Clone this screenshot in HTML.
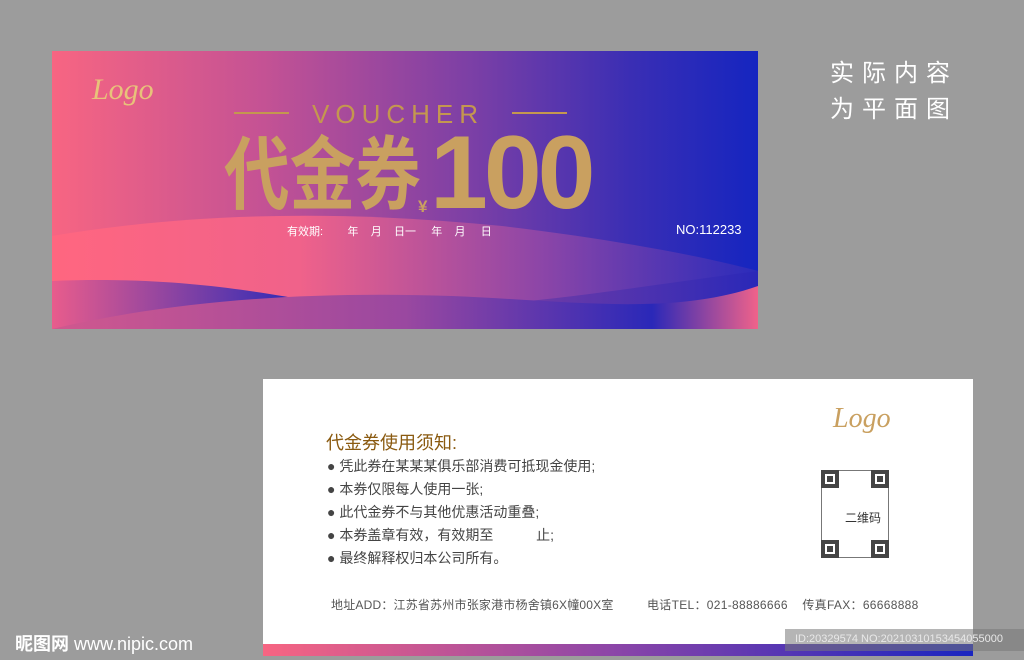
<!DOCTYPE html>
<html><head><meta charset="utf-8"><style>
*{margin:0;padding:0;box-sizing:border-box}
body{width:1024px;height:660px;background:#9c9c9c;position:relative;overflow:hidden;font-family:"Liberation Sans","Noto Sans CJK SC",sans-serif}
.abs{position:absolute}
.gold{color:#c4974f}
.qc{position:absolute;width:18px;height:18px;border:4px solid #444;background:#fff}
.qc div{margin:2px;width:6px;height:6px;background:#444}
</style></head><body>
<div class="abs" style="left:52px;top:51px;width:706px;height:278px;overflow:hidden;background:linear-gradient(90deg,#f76582 0%,#c45294 30%,#7a3fa6 60%,#3a2eb4 82%,#1525c0 100%)">
<svg class="abs" style="left:0;top:0" width="706" height="278">
<defs>
<linearGradient id="p" x1="0" x2="1"><stop offset="0" stop-color="#ff6680"/><stop offset=".35" stop-color="#f0628a"/><stop offset=".7" stop-color="#8a45a8"/><stop offset="1" stop-color="#3a30b8" stop-opacity=".6"/></linearGradient>
<linearGradient id="b" x1="0" x2="1"><stop offset="0" stop-color="#e85c8c"/><stop offset=".35" stop-color="#2b2ab8"/><stop offset=".7" stop-color="#6a3aa8"/><stop offset="1" stop-color="#2a28b8"/></linearGradient>
<linearGradient id="c" x1="0" x2="1"><stop offset="0" stop-color="#d0588e"/><stop offset=".5" stop-color="#9a48a0"/><stop offset=".85" stop-color="#2a28b8"/><stop offset="1" stop-color="#f0628a"/></linearGradient>
</defs>
<path d="M0 185 C150 160 300 160 450 175 C560 188 650 205 706 220 L706 278 L0 278Z" fill="url(#p)"/>
<path d="M0 230 C120 225 200 240 260 250 C400 270 550 240 706 220 L706 278 L0 278Z" fill="url(#b)"/>
<path d="M0 278 C120 250 250 240 400 245 C520 250 620 265 706 235 L706 278Z" fill="url(#c)"/>
</svg>
<div class="abs" style="left:40px;top:22px;font:italic 30px 'Liberation Serif',serif;color:#e8c27a">Logo</div>
<div class="abs" style="left:182px;top:61px;width:55px;height:2px;background:#c4974f"></div>
<div class="abs" style="left:460px;top:61px;width:55px;height:2px;background:#c4974f"></div>
<div class="abs gold" style="left:260px;top:48px;font-size:26px;letter-spacing:6px">VOUCHER</div>
<div class="abs" style="left:172px;top:78px;font:bold 80px 'Noto Sans CJK SC',sans-serif;color:#c9a060;line-height:1;white-space:nowrap;transform:scaleX(.82);transform-origin:left">代金券</div>
<div class="abs" style="left:366px;top:146px;font:bold 17px sans-serif;color:#c9a060">¥</div>
<div class="abs" style="left:378px;top:70px;font:bold 104px 'Liberation Sans',sans-serif;color:#c9a060;letter-spacing:-4px;line-height:1">100</div>
<div class="abs" style="left:235px;top:172px;color:#fff;font-size:11px">有效期:&nbsp;&nbsp;&nbsp;&nbsp;&nbsp;&nbsp;&nbsp;&nbsp;年&nbsp;&nbsp;&nbsp;&nbsp;月&nbsp;&nbsp;&nbsp;&nbsp;日一&nbsp;&nbsp;&nbsp;&nbsp;&nbsp;年&nbsp;&nbsp;&nbsp;&nbsp;月&nbsp;&nbsp;&nbsp;&nbsp;&nbsp;日</div>
<div class="abs" style="left:624px;top:171px;color:#fff;font-size:13px">NO:112233</div>
</div>
<div class="abs" style="left:830px;top:56px;color:#fff;font-size:24px;letter-spacing:8px;line-height:36px">实际内容<br>为平面图</div>
<div class="abs" style="left:263px;top:379px;width:710px;height:277px;background:#fff">
<div class="abs" style="left:0;bottom:0;width:710px;height:12px;background:linear-gradient(90deg,#f76582,#8a45a8 50%,#1a25c0)"></div>
<div class="abs" style="left:570px;top:24px;font:italic 28px 'Liberation Serif',serif;color:#c9a060">Logo</div>
<div class="abs" style="left:63px;top:50px;font-size:18px;color:#8a5a10">代金券使用须知:</div>
<div class="abs" style="left:64px;top:76px;font-size:14px;color:#444;line-height:23px">● 凭此券在某某某俱乐部消费可抵现金使用;<br>● 本券仅限每人使用一张;<br>● 此代金券不与其他优惠活动重叠;<br>● 本券盖章有效，有效期至&nbsp;&nbsp;&nbsp;&nbsp;&nbsp;&nbsp;&nbsp;&nbsp;&nbsp;&nbsp;&nbsp;止;<br>● 最终解释权归本公司所有。</div>
<div class="abs" style="left:558px;top:91px;width:68px;height:88px;border:1px solid #777"></div>
<div class="qc" style="left:558px;top:91px"><div></div></div>
<div class="qc" style="left:608px;top:91px"><div></div></div>
<div class="qc" style="left:558px;top:161px"><div></div></div>
<div class="qc" style="left:608px;top:161px"><div></div></div>
<div class="abs" style="left:582px;top:130px;font-size:12px;color:#333">二维码</div>
<div class="abs" style="left:68px;top:217px;font-size:12px;color:#555;white-space:nowrap;letter-spacing:.2px">地址ADD：江苏省苏州市张家港市杨舍镇6X幢00X室</div>
<div class="abs" style="left:384px;top:217px;font-size:12px;color:#555;white-space:nowrap;letter-spacing:.3px">电话TEL：021-88886666&nbsp;&nbsp;&nbsp;&nbsp;传真FAX：66668888</div>
</div>
<div class="abs" style="left:785px;top:629px;width:239px;height:22px;background:rgba(120,120,120,.55);color:#e8e8e8;font-size:11px;padding:4px 0 0 10px;white-space:nowrap">ID:20329574 NO:20210310153454055000</div>
<div class="abs" style="left:15px;top:630px;color:#fff;font-size:18px;font-weight:bold;white-space:nowrap">昵图网 <span style="font-weight:normal">www.nipic.com</span></div>
</body></html>
